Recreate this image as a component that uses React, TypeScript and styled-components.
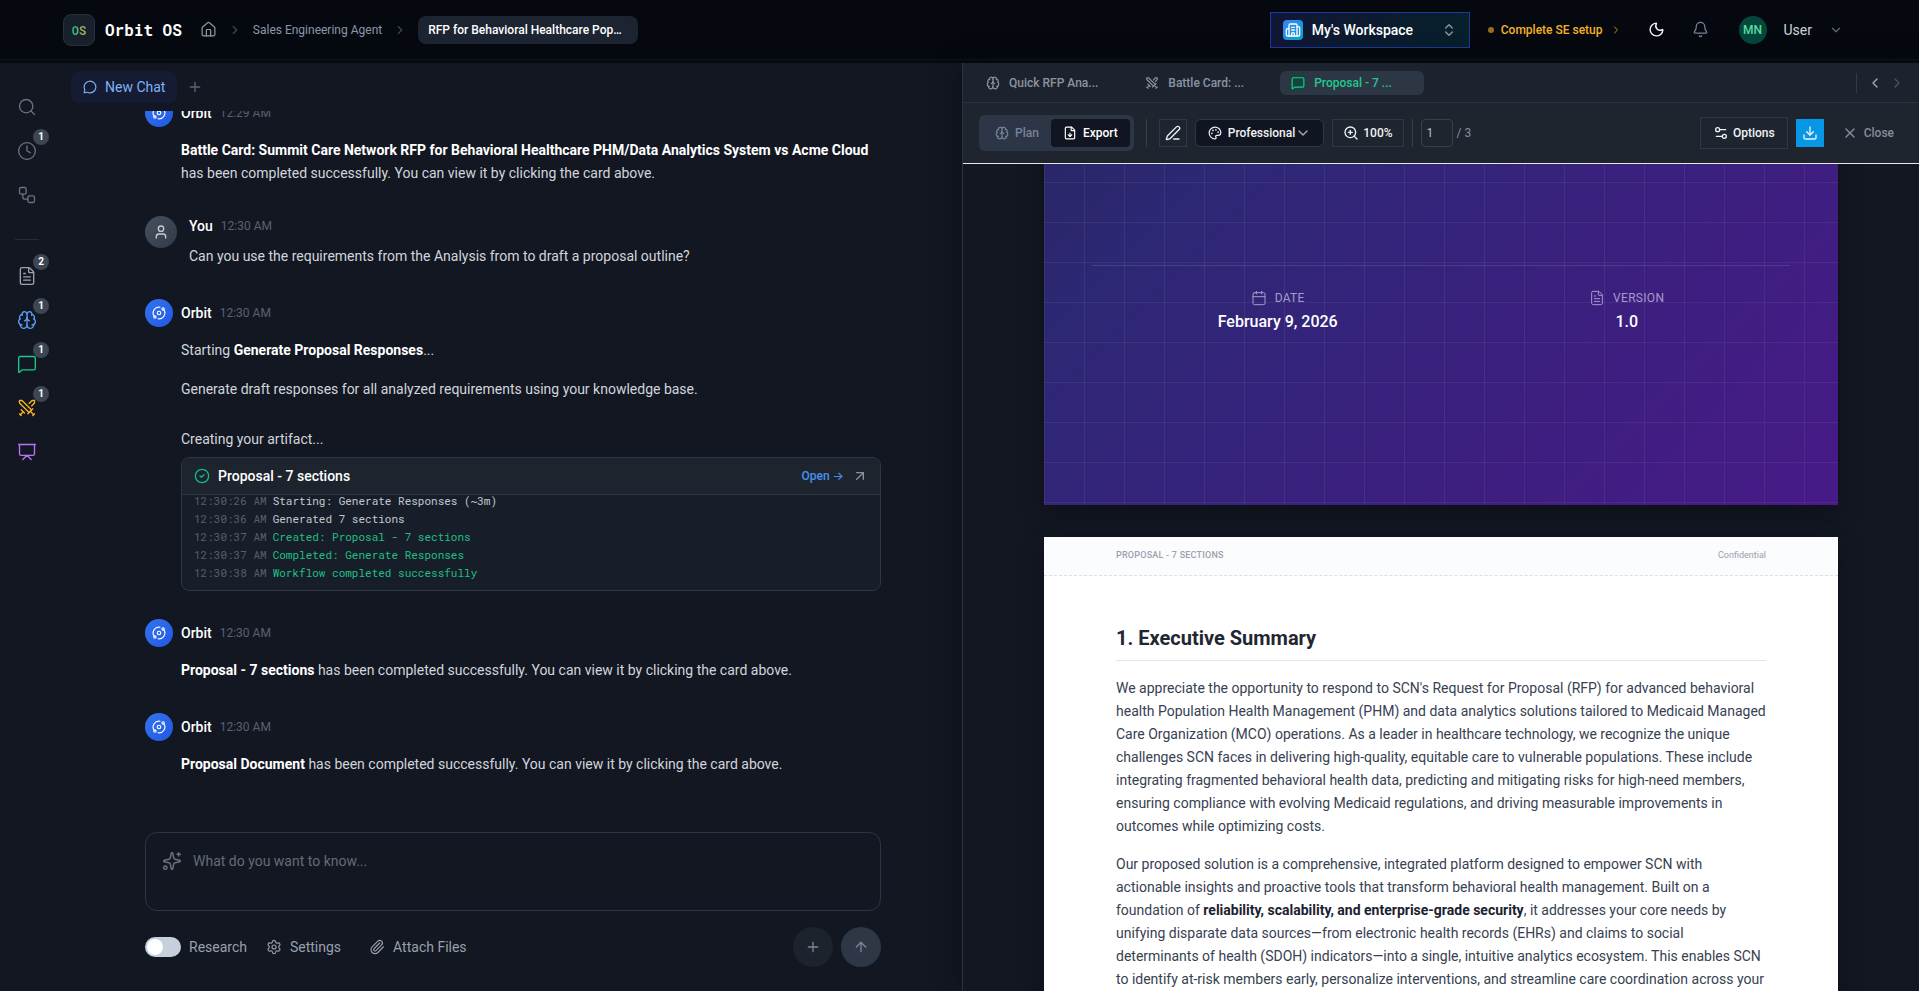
import React, { useLayoutEffect, useRef, useState } from "react";
import styled, { createGlobalStyle, css } from "styled-components";
import {
  ArrowUp,
  ArrowUpRight,
  Bell,
  Brain,
  Building2,
  Calendar,
  ChevronDown,
  ChevronLeft,
  ChevronRight,
  ChevronsUpDown,
  CircleCheck,
  Clock,
  Download,
  FileDown,
  FileText,
  House,
  MessageCircle,
  MessageSquare,
  Moon,
  Orbit,
  Palette,
  Paperclip,
  PenLine,
  Plus,
  Presentation,
  Search,
  Settings,
  Settings2,
  Sparkles,
  Swords,
  User,
  Workflow,
  X,
  ZoomIn,
} from "lucide-react";

const sans = `Roboto, "Liberation Sans", sans-serif`;
const mono = `"Roboto Mono", "DejaVu Sans Mono", monospace`;

const GlobalStyle = createGlobalStyle`
  *, *::before, *::after { box-sizing: border-box; }
  body {
    margin: 0;
    background: #131722;
    color: #d1d5db;
    font: 400 14px/20px ${sans};
    -webkit-font-smoothing: antialiased;
  }
  button, input, textarea { font: inherit; color: inherit; }
  button { padding: 0; border: 0; background: none; cursor: pointer; }
  a { color: inherit; text-decoration: none; }
  p, h1, h2, ul, ol { margin: 0; padding: 0; }
  svg { flex-shrink: 0; display: block; }
`;

const Shell = styled.div`
  display: flex;
  flex-direction: column;
  height: 100vh;
  overflow: hidden;
`;

/* ---------- top bar ---------- */

const TopBar = styled.header`
  flex: none;
  display: flex;
  align-items: center;
  justify-content: space-between;
  height: 63px;
  padding: 0 76px 4px 63px;
  background: linear-gradient(#05090f 59px, #0f1520 59px, #0f1520 60px, #070a12 60px);
`;

const TopGroup = styled.div`
  display: flex;
  align-items: center;
`;

const Logo = styled.div`
  display: flex;
  align-items: center;
  gap: 10px;
  margin-right: 18px;
  color: #fff;
  font: 700 16px/24px ${mono};
`;

const LogoMark = styled.span`
  display: grid;
  place-items: center;
  width: 32px;
  height: 32px;
  border: 1px solid #263040;
  border-radius: 8px;
  background: #18202c;
  font-size: 12px;
  line-height: 16px;

  span {
    background: linear-gradient(90deg, #14b88f, #c3b04a);
    background-clip: text;
    color: transparent;
  }
`;

const Crumbs = styled.nav`
  display: flex;
  align-items: center;
  gap: 11px;
  font-size: 12px;
  line-height: 16px;
  color: #8b97ab;

  > svg { color: #3d4859; }
`;

const CrumbCurrent = styled.span`
  width: 220px;
  padding: 6px 10px;
  border-radius: 8px;
  background: #1c2331;
  color: #fff;
  font-weight: 500;
`;

const WorkspaceButton = styled.button`
  display: flex;
  align-items: center;
  gap: 9px;
  width: 200px;
  height: 36px;
  padding: 0 12px;
  border: 1px solid #1e3a9c;
  background: linear-gradient(90deg, #111736, #07202a);
  color: #fff;
  font-weight: 500;
  text-align: left;

  span { flex: 1; }
  > svg { color: #8b97a5; }
`;

const WorkspaceIcon = styled.i`
  display: grid;
  place-items: center;
  width: 20px;
  height: 20px;
  border-radius: 4px;
  background: linear-gradient(135deg, #3b82f6, #06a5d0);
`;

const SetupLink = styled.a`
  display: flex;
  align-items: center;
  gap: 7px;
  margin: 0 13px 0 18px;
  color: #f5b027;
  font-size: 12px;
  line-height: 16px;
  font-weight: 500;

  &::before {
    content: "";
    width: 6px;
    height: 6px;
    border-radius: 50%;
    background: #996d20;
  }
  svg { color: #c58c24; }
`;

const BarIcon = styled.button<{ $tone: string }>`
  display: grid;
  place-items: center;
  width: 44px;
  height: 32px;
  color: ${(p) => p.$tone};
`;

const UserButton = styled.button`
  display: flex;
  align-items: center;
  gap: 17px;
  margin-left: 16px;
  color: #cbd2dc;

  svg { color: #5f6b80; }
`;

const Initials = styled.span`
  display: grid;
  place-items: center;
  width: 28px;
  height: 28px;
  border-radius: 50%;
  background: #06473b;
  color: #58dba5;
  font-size: 12px;
  font-weight: 500;
`;

/* ---------- body frame ---------- */

const Body = styled.div`
  flex: 1;
  min-height: 0;
  display: grid;
  grid-template-columns: 64px minmax(0, 898fr) minmax(0, 957fr);
`;

const Rail = styled.nav`
  display: flex;
  flex-direction: column;
  gap: 4px;
  padding: 24px 0 0 7px;
`;

const RailButton = styled.button<{ $tone: string }>`
  flex: none;
  position: relative;
  display: grid;
  place-items: center;
  width: 40px;
  height: 40px;
  color: ${(p) => p.$tone};
`;

const RailBadge = styled.span`
  position: absolute;
  top: -2px;
  right: -2px;
  width: 16px;
  height: 16px;
  border-radius: 50%;
  background: #3d4653;
  color: #fff;
  font-size: 10px;
  line-height: 16px;
  font-weight: 700;
  text-align: center;
`;

const RailRule = styled.hr`
  width: 24px;
  height: 1px;
  margin: 20px 0 12px 8px;
  border: 0;
  background: #252c39;
`;

/* ---------- chat ---------- */

const Chat = styled.main`
  display: flex;
  flex-direction: column;
  min-height: 0;
`;

const ChatTabs = styled.div`
  display: flex;
  align-items: center;
  gap: 10px;
  padding: 8px 7px;
`;

const ChatTab = styled.button`
  display: flex;
  align-items: center;
  gap: 8px;
  height: 32px;
  padding: 0 12px;
  border-radius: 8px;
  background: #141b33;
  color: #7fb2f5;
`;

const AddTab = styled.button`
  display: grid;
  place-items: center;
  width: 16px;
  height: 16px;
  color: #5b6372;
`;

const Messages = styled.section`
  flex: 1;
  min-height: 0;
  overflow: hidden;
  display: flex;
  flex-direction: column;
  justify-content: flex-end;
  gap: 28px;
  width: 100%;
  max-width: 768px;
  margin: 0 auto;
  padding: 0 16px 37px;
`;

const BotMessage = styled.article`
  flex: none;
`;

const MessageHead = styled.header`
  display: flex;
  align-items: center;
  gap: 8px;

  strong { color: #fff; font-weight: 500; }
  time { color: #5a6170; font-size: 12px; }
`;

const Avatar = styled.span<{ $user?: boolean }>`
  flex: none;
  display: grid;
  place-items: center;
  border-radius: 50%;
  ${(p) =>
    p.$user
      ? css`
          width: 32px;
          height: 32px;
          background: linear-gradient(135deg, #465060, #303a48);
          color: #c5cad2;
        `
      : css`
          width: 28px;
          height: 28px;
          background: linear-gradient(135deg, #3474f0, #2058e4);
          color: #fff;
        `}
`;

const BotBody = styled.div`
  margin: 12px 0 0 36px;
`;

const Text = styled.p`
  padding-bottom: 3px;
  line-height: 23px;

  & + & { margin-top: 13px; }
  strong { color: #fff; font-weight: 700; }
`;

const UserMessage = styled.article`
  flex: none;
  display: flex;
  gap: 12px;

  header { margin-bottom: 9px; }
`;

const Artifact = styled.div`
  margin-top: 24px;

  > p { padding-bottom: 6px; line-height: 23px; }
`;

const ArtifactCard = styled.section`
  border: 1px solid #2c3645;
  border-radius: 8px;
  background: #181e29;
  overflow: hidden;
`;

const ArtifactHead = styled.header`
  display: flex;
  align-items: center;
  gap: 8px;
  height: 37px;
  padding: 0 12px;
  border-bottom: 1px solid #2c3645;
  background: #1d242e;

  > svg { color: #12b886; }
  h2 { flex: 1; color: #fff; font-size: 14px; line-height: 20px; font-weight: 500; }
  a { color: #4a90ee; font-size: 12px; line-height: 16px; font-weight: 500; }
  a span { font-family: Inter, sans-serif; }
  button { color: #8b93a1; }
`;

const Log = styled.ol`
  display: flex;
  flex-direction: column;
  justify-content: flex-end;
  height: 95px;
  padding: 0 12px 8px;
  overflow: hidden;
  list-style: none;
  font: 400 11px/18px ${mono};
`;

const LogLine = styled.li<{ $done?: boolean }>`
  flex: none;
  display: flex;
  gap: 6px;
  color: ${(p) => (p.$done ? "#1fbf83" : "#c3c8d0")};

  time { color: #565e6c; }
`;

const Composer = styled.form`
  flex: none;
  display: flex;
  flex-direction: column;
  gap: 16px;
  width: 100%;
  max-width: 768px;
  margin: 0 auto;
  padding: 16px 16px 24px;
`;

const Prompt = styled.label`
  display: flex;
  gap: 11px;
  height: 79px;
  padding: 18px 16px;
  border: 1px solid #2b3444;
  border-radius: 12px;
  color: #6b7280;
`;

const PromptInput = styled.textarea`
  flex: 1;
  padding: 0;
  border: 0;
  outline: 0;
  resize: none;
  background: none;
  color: #d1d5db;
  line-height: 20px;

  &::placeholder { color: #646b79; opacity: 1; }
`;

const ComposerBar = styled.div`
  display: flex;
  align-items: center;
  color: #99a0ac;
`;

const Research = styled.label`
  display: flex;
  align-items: center;
  gap: 8px;
  margin-right: 19px;
`;

const Switch = styled.input`
  appearance: none;
  display: flex;
  align-items: center;
  width: 36px;
  height: 20px;
  margin: 0;
  padding: 2px;
  border-radius: 10px;
  background: #c5d0dc;

  &::before {
    content: "";
    width: 16px;
    height: 16px;
    border-radius: 50%;
    background: #fff;
  }
  &:checked { background: #3b82f6; justify-content: flex-end; }
`;

const TextButton = styled.button`
  display: flex;
  align-items: center;
  gap: 8px;
  margin-right: 28px;
`;

const RoundButton = styled.button<{ $bg: string }>`
  display: grid;
  place-items: center;
  width: 40px;
  height: 40px;
  margin-left: 8px;
  border-radius: 50%;
  background: ${(p) => p.$bg};
  color: #7d8694;
`;

const Spacer = styled.div`
  flex: 1;
`;

/* ---------- document panel ---------- */

const Panel = styled.aside`
  display: flex;
  flex-direction: column;
  min-height: 0;
  border-left: 1px solid #2a3340;
  background: #1c232e;
  box-shadow: -4px 0 24px rgba(5, 9, 16, 0.4);
`;

const PanelTabs = styled.div`
  flex: none;
  display: flex;
  align-items: center;
  gap: 4px;
  height: 40px;
  padding: 2px 14px 1px 12px;
  border-bottom: 1px solid #2a3340;
`;

const PanelTab = styled.button<{ $active?: boolean }>`
  display: flex;
  align-items: center;
  gap: 8px;
  height: 24px;
  padding: 0 32px 0 10px;
  border-radius: 6px;
  background: ${(p) => (p.$active ? "#2d3645" : "none")};
  color: ${(p) => (p.$active ? "#1fca8c" : "#8c94a1")};
  font-size: 12px;
  line-height: 16px;
  font-weight: 500;

  i {
    display: grid;
    place-items: center;
    width: 16px;
    height: 16px;
    border-radius: 4px;
    background: ${(p) => (p.$active ? "#15443f" : "none")};
  }
`;

const TabPager = styled.div`
  display: flex;
  align-items: center;
  gap: 6px;
  height: 20px;
  padding-left: 10px;
  border-left: 1px solid #323b49;

  button { color: #a5acb8; }
  button:disabled { color: #4b5462; }
`;

const Toolbar = styled.div`
  flex: none;
  display: flex;
  align-items: center;
  gap: 8px;
  height: 61px;
  padding: 0 25px 0 16px;
  border-bottom: 1px solid #e5e7eb;
  background: #1e252f;
  font-size: 12px;
  line-height: 16px;
  font-weight: 500;
`;

const Segmented = styled.div`
  display: flex;
  height: 36px;
  padding: 4px;
  border-radius: 6px;
  background: #2c3647;
`;

const Segment = styled.button<{ $active?: boolean }>`
  display: flex;
  align-items: center;
  gap: 6px;
  padding: 0 12px;
  border-radius: 4px;
  background: ${(p) => (p.$active ? "#101521" : "none")};
  color: ${(p) => (p.$active ? "#fff" : "#77849a")};
`;

const Divider = styled.span<{ $wide?: boolean }>`
  width: 1px;
  height: 28px;
  margin: ${(p) => (p.$wide ? "0 4px" : "0")};
  background: #3a3f49;
`;

const ToolButton = styled.button`
  display: flex;
  align-items: center;
  justify-content: center;
  gap: 4px;
  height: 28px;
  padding: 0 10px;
  border: 1px solid #2d394a;
  color: #f1f3f5;
`;

const IconTool = styled(ToolButton)`
  width: 28px;
  padding: 0;
`;

const DownloadTool = styled(IconTool)`
  border: 0;
  background: #0797e6;
`;

const OptionsTool = styled(ToolButton)`
  height: 32px;
  padding: 0 12px;
`;

const ThemeTool = styled(ToolButton)`
  gap: 6px;
  padding: 0 12px;
  border-radius: 6px;
  background: #101521;

  span { display: flex; }
  span svg { color: #a5acb8; }
`;

const PageNumber = styled.label`
  display: flex;
  align-items: center;
  gap: 4px;
  color: #868e9b;
  font-weight: 400;

  input {
    width: 32px;
    height: 28px;
    padding: 0 5px;
    border: 1px solid #3a3f49;
    border-radius: 4px;
    background: none;
    color: #b9bfc8;
  }
`;

const CloseButton = styled.button`
  display: flex;
  align-items: center;
  gap: 6px;
  margin-left: 10px;
  color: #868e9b;
`;

const Pages = styled.div`
  flex: 1;
  min-height: 0;
  display: flex;
  flex-direction: column;
  align-items: center;
  gap: 32px;
  padding: 32px 0;
  overflow-y: auto;
  scrollbar-width: none;
  background: #131722;
`;

const pageSize = css`
  flex: none;
  width: 794px;
  height: 1123px;
  box-shadow: 0 8px 24px rgba(0, 0, 0, 0.3);
`;

const Cover = styled.section`
  ${pageSize}
  display: flex;
  flex-direction: column;
  justify-content: flex-end;
  padding: 48px 48px 171px;
  background:
    linear-gradient(rgba(255, 255, 255, 0.06) 1px, transparent 1px) 0 0 / 40px 40px,
    linear-gradient(90deg, rgba(255, 255, 255, 0.06) 1px, transparent 1px) 0 0 / 40px 40px,
    linear-gradient(135deg, #2a2668 40%, #2d2874 50%, #35237b 65%, #3e1e80 82%, #471a88 100%);
`;

const CoverFacts = styled.div`
  display: flex;
  justify-content: space-around;
  padding-top: 24px;
  border-top: 1px solid rgba(255, 255, 255, 0.12);
  text-align: center;
`;

const CoverFact = styled.div`
  color: #fff;
  font-size: 16px;
  line-height: 24px;
  font-weight: 500;
`;

const FactLabel = styled.div`
  display: flex;
  align-items: center;
  justify-content: center;
  gap: 8px;
  margin-bottom: 4px;
  color: #a79bc9;
  font-size: 12px;
  line-height: 16px;
  font-weight: 400;
  letter-spacing: 0.025em;
  text-transform: uppercase;
`;

const Sheet = styled.section`
  ${pageSize}
  background: #fff;
  color: #374151;
`;

const SheetHead = styled.header`
  display: flex;
  justify-content: space-between;
  height: 39px;
  padding: 10px 72px;
  border-bottom: 1px dashed #dcdfe4;
  background: #fbfcfe;
  color: #99a1ae;
  font-size: 9px;
  line-height: 16px;

  span:first-child {
    font-weight: 500;
    letter-spacing: 0.025em;
    text-transform: uppercase;
  }
`;

const SheetBody = styled.div`
  padding: 48px 72px;

  h1 {
    height: 37px;
    margin-bottom: 16px;
    border-bottom: 1px solid #e1e4e8;
    color: #1f2733;
    font-size: 20px;
    line-height: 28px;
    font-weight: 700;
  }
  p { line-height: 23px; }
  p + p { margin-top: 15px; }
  strong { color: #1a2230; font-weight: 700; }
`;

type RailItem = { label: string; icon: typeof Search; tone: string; badge?: number };

const railTop: RailItem[] = [
  { label: "Search", icon: Search, tone: "#6b7280" },
  { label: "History", icon: Clock, tone: "#6b7280", badge: 1 },
  { label: "Workflows", icon: Workflow, tone: "#6b7280" },
];

const railArtifacts: RailItem[] = [
  { label: "Documents", icon: FileText, tone: "#9ca3af", badge: 2 },
  { label: "Analyses", icon: Brain, tone: "#5a9cf5", badge: 1 },
  { label: "Proposals", icon: MessageSquare, tone: "#1bc98c", badge: 1 },
  { label: "Battle cards", icon: Swords, tone: "#f9b326", badge: 1 },
  { label: "Presentations", icon: Presentation, tone: "#b575f5" },
];

const logLines = [
  { time: "12:30:26 AM", text: "Starting: Generate Responses (~3m)" },
  { time: "12:30:36 AM", text: "Generated 7 sections" },
  { time: "12:30:37 AM", text: "Created: Proposal - 7 sections", done: true },
  { time: "12:30:37 AM", text: "Completed: Generate Responses", done: true },
  { time: "12:30:38 AM", text: "Workflow completed successfully", done: true },
];

function RailItems({ items }: { items: RailItem[] }) {
  return (
    <>
      {items.map(({ label, icon: Icon, tone, badge }) => (
        <RailButton key={label} $tone={tone} aria-label={label}>
          <Icon size={20} strokeWidth={1.6} />
          {badge && <RailBadge>{badge}</RailBadge>}
        </RailButton>
      ))}
    </>
  );
}

function Bot({ time, children }: { time: string; children: React.ReactNode }) {
  return (
    <BotMessage>
      <MessageHead>
        <Avatar>
          <Orbit size={14} />
        </Avatar>
        <strong>Orbit</strong>
        <time>{time}</time>
      </MessageHead>
      <BotBody>{children}</BotBody>
    </BotMessage>
  );
}

export default function App() {
  const pages = useRef<HTMLDivElement>(null);
  const [research, setResearch] = useState(false);
  const [page, setPage] = useState("1");

  useLayoutEffect(() => {
    if (pages.current) pages.current.scrollTop = 814;
  }, []);

  return (
    <Shell>
      <GlobalStyle />
      <TopBar>
        <TopGroup>
          <Logo>
            <LogoMark>
              <span>OS</span>
            </LogoMark>
            Orbit OS
          </Logo>
          <Crumbs aria-label="Breadcrumb">
            <a href="#home" aria-label="Home">
              <House size={17} strokeWidth={1.75} />
            </a>
            <ChevronRight size={14} />
            <a href="#agent">Sales Engineering Agent</a>
            <ChevronRight size={14} />
            <CrumbCurrent>RFP for Behavioral Healthcare Pop…</CrumbCurrent>
          </Crumbs>
        </TopGroup>
        <TopGroup>
          <WorkspaceButton>
            <WorkspaceIcon>
              <Building2 size={16} />
            </WorkspaceIcon>
            <span>My's Workspace</span>
            <ChevronsUpDown size={16} />
          </WorkspaceButton>
          <SetupLink href="#setup">
            Complete SE setup
            <ChevronRight size={12} />
          </SetupLink>
          <BarIcon $tone="#f1f3f5" aria-label="Theme">
            <Moon size={17} />
          </BarIcon>
          <BarIcon $tone="#76829a" aria-label="Notifications">
            <Bell size={17} strokeWidth={1.75} />
          </BarIcon>
          <UserButton>
            <Initials>MN</Initials>
            User
            <ChevronDown size={14} />
          </UserButton>
        </TopGroup>
      </TopBar>

      <Body>
        <Rail aria-label="Library">
          <RailItems items={railTop} />
          <RailRule />
          <RailItems items={railArtifacts} />
        </Rail>

        <Chat>
          <ChatTabs>
            <ChatTab>
              <MessageCircle size={14} />
              New Chat
            </ChatTab>
            <AddTab aria-label="New tab">
              <Plus size={16} />
            </AddTab>
          </ChatTabs>

          <Messages>
            <Bot time="12:29 AM">
              <Text>
                <strong>
                  Battle Card: Summit Care Network RFP for Behavioral Healthcare PHM/Data Analytics
                  System vs Acme Cloud
                </strong>{" "}
                has been completed successfully. You can view it by clicking the card above.
              </Text>
            </Bot>

            <UserMessage>
              <Avatar $user>
                <User size={16} />
              </Avatar>
              <div>
                <MessageHead>
                  <strong>You</strong>
                  <time>12:30 AM</time>
                </MessageHead>
                <Text>Can you use the requirements from the Analysis from to draft a proposal outline?</Text>
              </div>
            </UserMessage>

            <Bot time="12:30 AM">
              <Text>
                Starting <strong>Generate Proposal Responses</strong>...
              </Text>
              <Text>Generate draft responses for all analyzed requirements using your knowledge base.</Text>
              <Artifact>
                <p>Creating your artifact...</p>
                <ArtifactCard>
                  <ArtifactHead>
                    <CircleCheck size={16} />
                    <h2>Proposal - 7 sections</h2>
                    <a href="#open">
                      Open <span>→</span>
                    </a>
                    <button aria-label="Open in new window">
                      <ArrowUpRight size={16} />
                    </button>
                  </ArtifactHead>
                  <Log>
                    {logLines.map((line) => (
                      <LogLine key={line.text} $done={line.done}>
                        <time>{line.time}</time>
                        <span>{line.text}</span>
                      </LogLine>
                    ))}
                  </Log>
                </ArtifactCard>
              </Artifact>
            </Bot>

            <Bot time="12:30 AM">
              <Text>
                <strong>Proposal - 7 sections</strong> has been completed successfully. You can view it
                by clicking the card above.
              </Text>
            </Bot>

            <Bot time="12:30 AM">
              <Text>
                <strong>Proposal Document</strong> has been completed successfully. You can view it by
                clicking the card above.
              </Text>
            </Bot>
          </Messages>

          <Composer onSubmit={(e) => e.preventDefault()}>
            <Prompt>
              <Sparkles size={20} strokeWidth={1.75} />
              <PromptInput placeholder="What do you want to know..." aria-label="Message" />
            </Prompt>
            <ComposerBar>
              <Research>
                <Switch
                  type="checkbox"
                  checked={research}
                  onChange={(e) => setResearch(e.target.checked)}
                />
                Research
              </Research>
              <TextButton type="button">
                <Settings size={16} strokeWidth={1.75} />
                Settings
              </TextButton>
              <TextButton type="button">
                <Paperclip size={16} strokeWidth={1.75} />
                Attach Files
              </TextButton>
              <Spacer />
              <RoundButton type="button" $bg="#1c232d" aria-label="Add">
                <Plus size={16} />
              </RoundButton>
              <RoundButton type="submit" $bg="#2e3745" aria-label="Send">
                <ArrowUp size={16} />
              </RoundButton>
            </ComposerBar>
          </Composer>
        </Chat>

        <Panel>
          <PanelTabs>
            <PanelTab>
              <i>
                <Brain size={14} />
              </i>
              Quick RFP Ana...
            </PanelTab>
            <PanelTab>
              <i>
                <Swords size={14} />
              </i>
              Battle Card: ...
            </PanelTab>
            <PanelTab $active>
              <i>
                <MessageSquare size={14} />
              </i>
              Proposal - 7 ...
            </PanelTab>
            <Spacer />
            <TabPager>
              <button aria-label="Previous tab">
                <ChevronLeft size={16} />
              </button>
              <button aria-label="Next tab" disabled>
                <ChevronRight size={16} />
              </button>
            </TabPager>
          </PanelTabs>

          <Toolbar>
            <Segmented>
              <Segment>
                <Brain size={14} />
                Plan
              </Segment>
              <Segment $active>
                <FileDown size={14} />
                Export
              </Segment>
            </Segmented>
            <Divider $wide />
            <IconTool aria-label="Edit">
              <PenLine size={16} />
            </IconTool>
            <ThemeTool>
              <Palette size={14} />
              <span>
                Professional
                <ChevronDown size={16} />
              </span>
            </ThemeTool>
            <ToolButton>
              <ZoomIn size={16} />
              100%
            </ToolButton>
            <Divider />
            <PageNumber>
              <input value={page} onChange={(e) => setPage(e.target.value)} aria-label="Page" />/ 3
            </PageNumber>
            <Spacer />
            <OptionsTool>
              <Settings2 size={16} />
              Options
            </OptionsTool>
            <DownloadTool aria-label="Download">
              <Download size={16} />
            </DownloadTool>
            <CloseButton>
              <X size={16} />
              Close
            </CloseButton>
          </Toolbar>

          <Pages ref={pages}>
            <Cover>
              <CoverFacts>
                <CoverFact>
                  <FactLabel>
                    <Calendar size={16} strokeWidth={1.5} />
                    Date
                  </FactLabel>
                  February 9, 2026
                </CoverFact>
                <CoverFact>
                  <FactLabel>
                    <FileText size={16} strokeWidth={1.5} />
                    Version
                  </FactLabel>
                  1.0
                </CoverFact>
              </CoverFacts>
            </Cover>
            <Sheet>
              <SheetHead>
                <span>Proposal - 7 sections</span>
                <span>Confidential</span>
              </SheetHead>
              <SheetBody>
                <h1>1. Executive Summary</h1>
                <p>
                  We appreciate the opportunity to respond to SCN's Request for Proposal (RFP) for
                  advanced behavioral health Population Health Management (PHM) and data analytics
                  solutions tailored to Medicaid Managed Care Organization (MCO) operations. As a
                  leader in healthcare technology, we recognize the unique challenges SCN faces in
                  delivering high-quality, equitable care to vulnerable populations. These include
                  integrating fragmented behavioral health data, predicting and mitigating risks for
                  high-need members, ensuring compliance with evolving Medicaid regulations, and
                  driving measurable improvements in outcomes while optimizing costs.
                </p>
                <p>
                  Our proposed solution is a comprehensive, integrated platform designed to empower
                  SCN with actionable insights and proactive tools that transform behavioral health
                  management. Built on a foundation of{" "}
                  <strong>reliability, scalability, and enterprise-grade security</strong>, it
                  addresses your core needs by unifying disparate data sources—from electronic health
                  records (EHRs) and claims to social determinants of health (SDOH) indicators—into a
                  single, intuitive analytics ecosystem. This enables SCN to identify at-risk members
                  early, personalize interventions, and streamline care coordination across your
                </p>
              </SheetBody>
            </Sheet>
          </Pages>
        </Panel>
      </Body>
    </Shell>
  );
}
